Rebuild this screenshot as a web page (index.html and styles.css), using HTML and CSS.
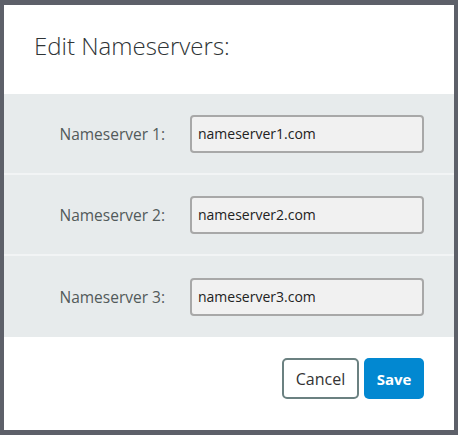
FILE: index.html
```html
<!DOCTYPE html>
<html lang="en">
<head>
  <meta charset="UTF-8">
  <title>Edit Nameservers</title>
  <meta name="viewport" content="width=device-width, initial-scale=1.0">
  <link rel="stylesheet" href="styles.css">
</head>
<body>
  <div class="modal">
    <div class="modal-header">
      <h2 class="modal-title">Edit Nameservers:</h2>
    </div>
    <div class="modal-body">
      <div class="ns-row">
        <label class="ns-label" for="ns1">Nameserver 1:</label>
        <input class="ns-input" id="ns1" type="text" value="nameserver1.com">
      </div>
      <div class="ns-row">
        <label class="ns-label" for="ns2">Nameserver 2:</label>
        <input class="ns-input" id="ns2" type="text" value="nameserver2.com">
      </div>
      <div class="ns-row">
        <label class="ns-label" for="ns3">Nameserver 3:</label>
        <input class="ns-input" id="ns3" type="text" value="nameserver3.com">
      </div>
    </div>
    <div class="modal-footer">
      <button class="btn btn-cancel">Cancel</button>
      <button class="btn btn-save">Save</button>
    </div>
  </div>
</body>
</html>
```

FILE: styles.css
```css
* {
  box-sizing: border-box;
}

html, body {
  height: 100%;
}

body {
  margin: 0;
  padding: 5px 4px;
  background: #5d6069;
  font-family: 'Open Sans', sans-serif;
}

.modal {
  width: 450px;
  height: 425px;
  background: #fff;
  display: flex;
  flex-direction: column;
}

.modal-header {
  height: 89px;
  padding: 26px 0 0 30px;
}

.modal-title {
  margin: 0;
  font-size: 24px;
  line-height: 30px;
  font-weight: 300;
  color: #2f3436;
}

.modal-body {
  background: #e7ebec;
}

.ns-row {
  height: 81px;
  display: flex;
  align-items: center;
  border-bottom: 2px solid #f2f4f5;
}

.ns-row:last-child {
  border-bottom: none;
}

.ns-label {
  width: 161px;
  text-align: right;
  font-size: 15.5px;
  color: #525a5a;
}

.ns-input {
  margin-left: 25px;
  width: 234px;
  height: 38px;
  padding: 0 6px;
  border: 2px solid #a8a8a8;
  border-radius: 4px;
  background: #f1f1f1;
  font-family: 'Open Sans', sans-serif;
  font-size: 14px;
  color: #222;
}

.modal-footer {
  flex: 1;
  display: flex;
  justify-content: flex-end;
  align-items: flex-start;
  gap: 5px;
  padding: 21px 30px 0 0;
}

.btn {
  height: 41px;
  border-radius: 5px;
  font-family: 'Open Sans', sans-serif;
  cursor: pointer;
}

.btn-cancel {
  width: 77px;
  background: #fff;
  border: 2px solid #6b8181;
  color: #333;
  font-size: 16px;
}

.btn-save {
  width: 60px;
  background: #0288d1;
  border: none;
  color: #fff;
  font-size: 15px;
  font-weight: 700;
}
```
